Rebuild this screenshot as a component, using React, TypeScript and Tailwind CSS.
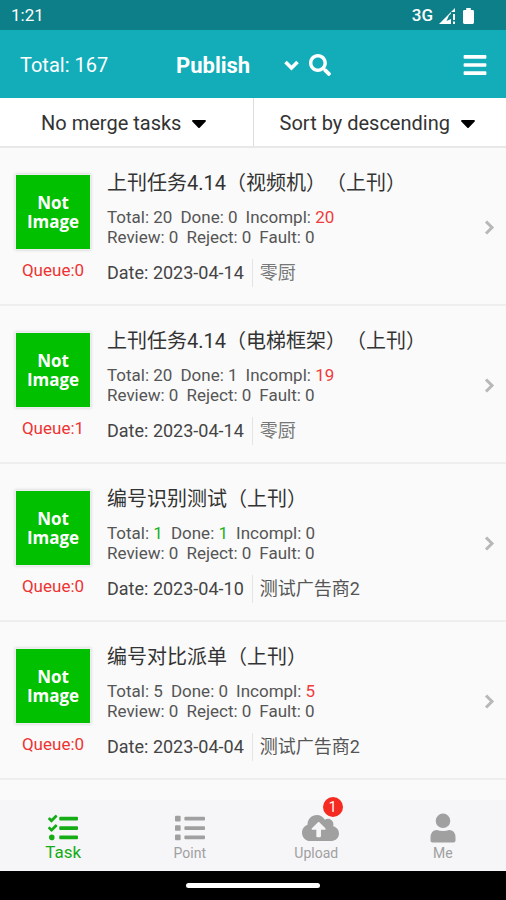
import { FaBars, FaCaretDown, FaCloudUploadAlt, FaList, FaSearch, FaTasks, FaUserAlt } from "react-icons/fa";

type Count = { label: string; value: number; color?: string };
type Task = { title: string; queue: number; counts: Count[]; date: string; client: string; clientColor: string };

const RED = "text-[#f03c3c]";
const GREEN = "text-[#22b022]";

const tasks: Task[] = [
  {
    title: "上刊任务4.14（视频机）（上刊）",
    queue: 0,
    counts: [{ label: "Total", value: 20 }, { label: "Done", value: 0 }, { label: "Incompl", value: 20, color: RED }],
    date: "2023-04-14",
    client: "零厨",
    clientColor: "text-[#777777]",
  },
  {
    title: "上刊任务4.14（电梯框架）（上刊）",
    queue: 1,
    counts: [{ label: "Total", value: 20 }, { label: "Done", value: 1 }, { label: "Incompl", value: 19, color: RED }],
    date: "2023-04-14",
    client: "零厨",
    clientColor: "text-[#777777]",
  },
  {
    title: "编号识别测试（上刊）",
    queue: 0,
    counts: [{ label: "Total", value: 1, color: GREEN }, { label: "Done", value: 1, color: GREEN }, { label: "Incompl", value: 0 }],
    date: "2023-04-10",
    client: "测试广告商2",
    clientColor: "text-[#555555]",
  },
  {
    title: "编号对比派单（上刊）",
    queue: 0,
    counts: [{ label: "Total", value: 5 }, { label: "Done", value: 0 }, { label: "Incompl", value: 5, color: RED }],
    date: "2023-04-04",
    client: "测试广告商2",
    clientColor: "text-[#555555]",
  },
];

function StatusBar() {
  return (
    <div className="flex h-[30px] items-center justify-between bg-[#0d7f88] pt-[2px] pr-8 pl-[11px] text-white">
      <span className="text-[17px]">1:21</span>
      <div className="flex items-center gap-[6px]">
        <span className="text-[17px] font-medium">3G</span>
        <svg width="16" height="16" viewBox="0 0 16 16" fill="currentColor" aria-hidden="true">
          <path d="M0 16 L16 0 V4 H12 V16 Z M14 6 h2 v6 h-2 Z M14 13.5 h2 V16 h-2 Z" />
          <path d="M10 7.5 L12 5.5 V11 L7.5 13 Z" fill="#0d7f88" />
        </svg>
        <svg className="ml-[2px]" width="11" height="16" viewBox="0 0 11 16" fill="currentColor" aria-hidden="true">
          <path d="M3.2 0 h4.6 v2 H9.6 Q11 2 11 3.4 V14.6 Q11 16 9.6 16 H1.4 Q0 16 0 14.6 V3.4 Q0 2 1.4 2 H3.2 Z" />
        </svg>
      </div>
    </div>
  );
}

function Header() {
  return (
    <header className="grid h-[68px] grid-cols-3 items-center bg-[#12adb9] pt-[2px] pr-[18px] pl-5 text-white">
      <span className="text-xl">Total: 167</span>
      <div className="flex items-center gap-[10px]">
        <label className="flex items-center gap-[34px]">
          <select aria-label="Task type" className="field-sizing-content appearance-none bg-transparent text-[22px] font-bold">
            <option>Publish</option>
          </select>
          <svg width="15" height="11" viewBox="0 0 15 11" fill="none" stroke="currentColor" strokeWidth="3.6" aria-hidden="true">
            <path d="M1.5 2 L7.5 8 L13.5 2" />
          </svg>
        </label>
        <button type="button" aria-label="Search">
          <FaSearch className="size-[22px]" />
        </button>
      </div>
      <button type="button" aria-label="Menu" className="justify-self-end">
        <FaBars className="size-[26px]" />
      </button>
    </header>
  );
}

function Filter({ label, value }: { label: string; value: string }) {
  return (
    <label className="flex flex-1 items-center justify-center gap-[6px] pt-[2px]">
      <select aria-label={label} className="field-sizing-content appearance-none bg-transparent text-xl text-[#333333]">
        <option>{value}</option>
      </select>
      <FaCaretDown className="size-6 text-black" />
    </label>
  );
}

function TaskRow({ task }: { task: Task }) {
  return (
    <li className="border-b-2 border-[#eeeeee]">
      <a href="#task" className="flex h-[156px] items-center gap-4 pt-[3px] pr-2 pl-[15px]">
        <div className="flex w-19 flex-col items-center gap-2">
          <div className="flex size-19 items-center justify-center border border-[#eeeeee] bg-[#00c000] shadow-[0_0_3px_#cccccc]">
            <span className="w-14 text-center font-['Open_Sans',sans-serif] text-[17px] leading-[19px] font-bold text-white">Not Image</span>
          </div>
          <span className="text-[17px] leading-6 text-[#ee3333]">Queue:{task.queue}</span>
        </div>
        <div className="min-w-0 flex-1">
          <h2 className="text-xl leading-7 font-normal text-[#333333] [text-spacing-trim:space-all]">{task.title}</h2>
          <div className="mt-[10px] text-[17px] leading-5 text-[#555555]">
            <p className="flex gap-2">
              {task.counts.map((c) => (
                <span key={c.label}>
                  {c.label}: <span className={c.color}>{c.value}</span>
                </span>
              ))}
            </p>
            <p className="flex gap-2">
              <span>Review: 0</span>
              <span>Reject: 0</span>
              <span>Fault: 0</span>
            </p>
          </div>
          <div className="mt-3 flex items-center gap-2 text-lg leading-7 text-[#444444]">
            <span>Date: {task.date}</span>
            <span className={`border-l border-[#e4e4e4] pl-[7px] ${task.clientColor}`}>{task.client}</span>
          </div>
        </div>
        <svg width="14" height="15" viewBox="0 0 14 15" fill="none" stroke="#b8b8b8" strokeWidth="3" aria-hidden="true">
          <path d="M2 1.5 L8 7.5 L2 13.5" />
        </svg>
      </a>
    </li>
  );
}

function TabBar() {
  return (
    <nav className="grid h-[71px] grid-cols-4 bg-[#f6f6f8] pt-[13px] text-sm text-[#a0a0a0]">
      <a href="#task" className="flex flex-col items-center text-[#16ac16]">
        <FaTasks className="size-[30px]" />
        <span className="text-[17px] leading-[18px]">Task</span>
      </a>
      <a href="#point" className="flex flex-col items-center">
        <FaList className="size-[30px]" />
        <span className="leading-5">Point</span>
      </a>
      <a href="#upload" className="flex flex-col items-center">
        <div className="relative pl-2">
          <FaCloudUploadAlt className="h-[30px] w-[37px]" />
          <span className="absolute -top-4 -right-1 flex size-5 items-center justify-center rounded-full bg-[#f52a20] text-sm text-white">1</span>
        </div>
        <span className="leading-5">Upload</span>
      </a>
      <a href="#me" className="flex flex-col items-center">
        <svg width="26" height="30" viewBox="0 0 26 30" fill="currentColor" aria-hidden="true">
          <circle cx="13" cy="7.8" r="7.3" />
          <path d="M0.5 25 Q0.5 17 7 17 Q9.5 18 13 18 Q16.500 18 19 17 Q25.500 17 25.500 25 V27.500 Q25.500 29.500 23.500 29.500 H2.500 Q0.500 29.500 0.500 27.500 Z" />
        </svg>
        <span className="leading-5">Me</span>
      </a>
    </nav>
  );
}

export default function App() {
  return (
    <div className="flex min-h-screen flex-col bg-[#fafafa] font-[Roboto,'Noto_Sans_CJK_SC',sans-serif]">
      <StatusBar />
      <Header />
      <div className="flex h-[50px] divide-x divide-[#dddddd] border-b-2 border-[#e8e8e8] bg-white">
        <Filter label="Merge" value="No merge tasks" />
        <Filter label="Sort" value="Sort by descending" />
      </div>
      <ul className="flex-1">
        {tasks.map((task) => (
          <TaskRow key={task.title} task={task} />
        ))}
      </ul>
      <TabBar />
      <div className="flex h-[29px] items-center justify-center bg-black">
        <div className="h-[5px] w-[134px] rounded-full bg-white" />
      </div>
    </div>
  );
}
